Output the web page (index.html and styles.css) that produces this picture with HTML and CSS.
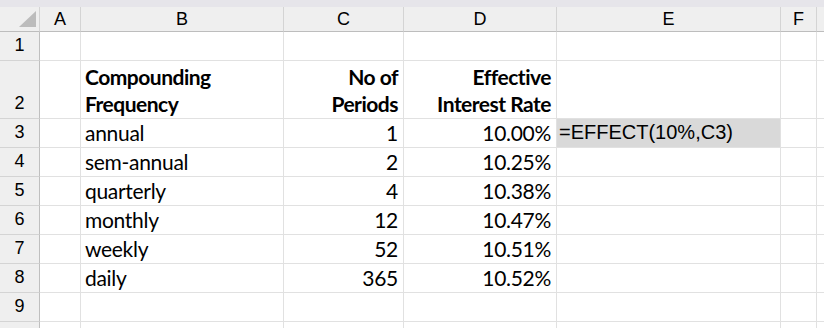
FILE: index.html
```html
<!DOCTYPE html>
<html>
<head>
<meta charset="utf-8">
<link rel="stylesheet" href="styles.css">
</head>
<body>
<div class="topband"></div>
<div class="sheet">
  <div class="corner"><span class="tri"></span></div>
  <div class="ch">A</div><div class="ch">B</div><div class="ch">C</div><div class="ch">D</div><div class="ch">E</div><div class="ch">F</div><div class="ch last"></div>

  <div class="rh">1</div><div class="c"></div><div class="c"></div><div class="c"></div><div class="c"></div><div class="c"></div><div class="c"></div><div class="c last"></div>

  <div class="rh">2</div><div class="c"></div>
  <div class="c b">Compounding<br>Frequency</div>
  <div class="c b r">No of<br>Periods</div>
  <div class="c b r">Effective<br>Interest Rate</div>
  <div class="c"></div><div class="c"></div><div class="c last"></div>

  <div class="rh">3</div><div class="c"></div><div class="c">annual</div><div class="c r">1</div><div class="c r">10.00%</div><div class="c sel">=EFFECT(10%,C3)</div><div class="c"></div><div class="c last"></div>
  <div class="rh">4</div><div class="c"></div><div class="c">sem-annual</div><div class="c r">2</div><div class="c r">10.25%</div><div class="c"></div><div class="c"></div><div class="c last"></div>
  <div class="rh">5</div><div class="c"></div><div class="c">quarterly</div><div class="c r">4</div><div class="c r">10.38%</div><div class="c"></div><div class="c"></div><div class="c last"></div>
  <div class="rh">6</div><div class="c"></div><div class="c">monthly</div><div class="c r">12</div><div class="c r">10.47%</div><div class="c"></div><div class="c"></div><div class="c last"></div>
  <div class="rh">7</div><div class="c"></div><div class="c">weekly</div><div class="c r">52</div><div class="c r">10.51%</div><div class="c"></div><div class="c"></div><div class="c last"></div>
  <div class="rh">8</div><div class="c"></div><div class="c">daily</div><div class="c r">365</div><div class="c r">10.52%</div><div class="c"></div><div class="c"></div><div class="c last"></div>
  <div class="rh">9</div><div class="c"></div><div class="c"></div><div class="c"></div><div class="c"></div><div class="c"></div><div class="c"></div><div class="c last"></div>
  <div class="rh"></div><div class="c"></div><div class="c"></div><div class="c"></div><div class="c"></div><div class="c"></div><div class="c"></div><div class="c last"></div>
</div>
</body>
</html>
```
FILE: styles.css
```css
html, body {
  margin: 0;
  padding: 0;
  background: #ffffff;
  height: 328px;
  overflow: hidden;
}
.topband {
  height: 7px;
  background: #e6e5ea;
}
.sheet {
  display: grid;
  grid-template-columns: 40px 41px 203px 120px 153px 224px 36px 8px;
  grid-template-rows: 25px 29px 58px repeat(7, 29px) 7px;
  overflow: hidden;
}
.corner {
  background: #efefef;
  border-right: 1px solid #d4d4d4;
  border-bottom: 1px solid #bdbdbd;
  position: relative;
}
.tri {
  position: absolute;
  left: 19px;
  top: 4px;
  width: 0;
  height: 0;
  border-style: solid;
  border-width: 0 0 16px 17px;
  border-color: transparent transparent #bcbcbc transparent;
}
.ch {
  background: #efefef;
  border-right: 1px solid #d4d4d4;
  border-bottom: 1px solid #bdbdbd;
  font-family: "Liberation Sans", Arial, sans-serif;
  font-size: 18px;
  color: #000;
  display: flex;
  align-items: center;
  justify-content: center;
  padding-top: 1px;
}
.ch.last { border-right: none; }
.rh {
  background: #efefef;
  border-right: 1px solid #bfbfbf;
  border-bottom: 1px solid #d4d4d4;
  font-family: "Liberation Sans", Arial, sans-serif;
  font-size: 18px;
  color: #000;
  display: flex;
  align-items: flex-end;
  justify-content: center;
  padding-bottom: 5px;
  line-height: 20px;
  overflow: hidden;
}
.c {
  border-right: 1px solid #e1e1e1;
  border-bottom: 1px solid #e1e1e1;
  font-family: Lato, "Liberation Sans", sans-serif;
  font-size: 21px;
  letter-spacing: -0.3px;
  line-height: 27px;
  color: #000;
  display: flex;
  align-items: flex-end;
  padding: 0 4px 1px 4px;
  white-space: nowrap;
  overflow: visible;
}
.c.last { border-right: none; }
.c.b { font-weight: bold; letter-spacing: -0.5px; }
.c.r { justify-content: flex-end; text-align: right; padding-right: 5px; }
.c.sel {
  background: #d9d9d9;
  font-family: "Liberation Sans", Arial, sans-serif;
  font-size: 20px;
  letter-spacing: 0;
  padding-left: 2px;
}
```
